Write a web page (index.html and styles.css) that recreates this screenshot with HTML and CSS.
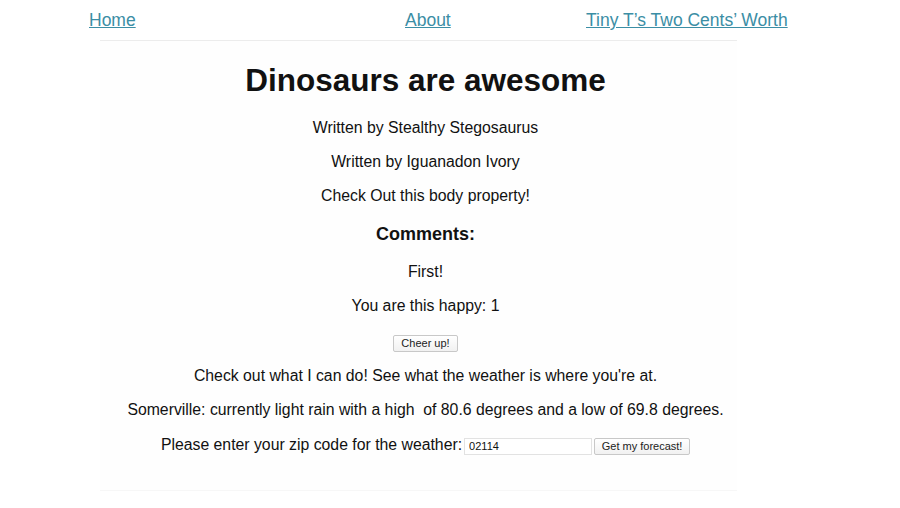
FILE: index.html
```html
<!DOCTYPE html>
<html>
<head>
<meta charset="utf-8">
<link rel="stylesheet" href="styles.css">
</head>
<body>
<nav class="nav">
  <a href="#">Home</a>
  <a href="#">About</a>
  <a href="#">Tiny T’s Two Cents’ Worth</a>
</nav>
<main class="panel">
  <h1 class="title">Dinosaurs are awesome</h1>
  <p class="line">Written by Stealthy Stegosaurus</p>
  <p class="line">Written by Iguanadon Ivory</p>
  <p class="line">Check Out this body property!</p>
  <h3 class="comments">Comments:</h3>
  <p class="line">First!</p>
  <p class="line">You are this happy: 1</p>
  <div class="cheer"><button class="btn">Cheer up!</button></div>
  <p class="line check">Check out what I can do! See what the weather is where you're at.</p>
  <p class="line">Somerville: currently light rain with a high &nbsp;of 80.6 degrees and a low of 69.8 degrees.</p>
  <form class="line zip">Please enter your zip code for the weather:<input class="zipin" type="text" value="02114"><button class="btn fbtn" type="button">Get my forecast!</button></form>
</main>
</body>
</html>
```

FILE: styles.css
```css
html, body {
  margin: 0;
  padding: 0;
  background: #ffffff;
}
body {
  font-family: "Liberation Sans", Arial, sans-serif;
  color: #111;
}
.nav {
  display: grid;
  grid-template-columns: 316px 181px auto;
  padding: 10px 0 0 89px;
  box-sizing: border-box;
  height: 40px;
  font-size: 17.5px;
  line-height: 20px;
}
.nav a {
  color: #3b8ea5;
  text-decoration: underline;
  justify-self: start;
}
.panel {
  margin-left: 100px;
  width: 637px;
  box-sizing: border-box;
  padding: 0 0 19px 14px;
  border-top: 1px solid #ececec;
  border-bottom: 1px solid #f7f7f7;
  background: #fefefe;
  text-align: center;
  display: flow-root;
}
.title {
  font-size: 31.5px;
  line-height: 36px;
  margin: 21px 0 21px;
  font-weight: bold;
}
.line {
  font-size: 15.8px;
  line-height: 18px;
  margin: 16px 0;
}
.title + .line { margin-top: 21px; }
.comments {
  font-size: 18px;
  line-height: 21px;
  margin: 19px 0 18px;
}
.cheer {
  margin: 19px 0 0;
  line-height: 17px;
}
.btn {
  font-family: "Liberation Sans", Arial, sans-serif;
  font-size: 11px;
  line-height: 13px;
  padding: 1px 7px;
  height: 17px;
  border: 1px solid #c8c8c8;
  border-radius: 2px;
  background: linear-gradient(#ffffff, #f1f1f1);
  color: #222;
  vertical-align: middle;
}
.check { margin-top: 15px; }
.zip { margin-top: 17px; }
.zipin {
  font-family: "Liberation Sans", Arial, sans-serif;
  font-size: 11px;
  width: 128px;
  height: 17px;
  box-sizing: border-box;
  padding: 0 4px;
  margin: 0 0 0 2px;
  border: 1px solid #e2e2e2;
  background: #fff;
  color: #111;
  vertical-align: middle;
}
.fbtn {
  margin-left: 2px;
  width: 96px;
  padding: 1px 4px;
}
```
